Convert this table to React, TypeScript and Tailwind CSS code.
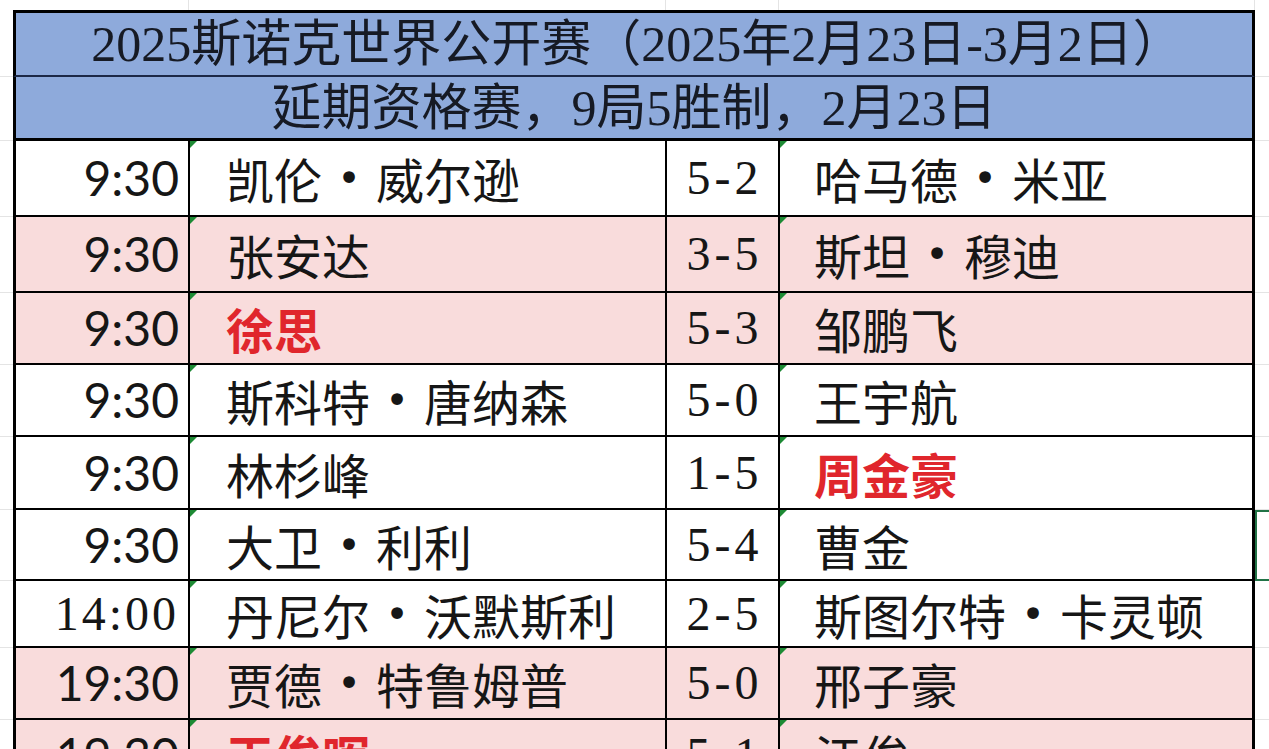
import { Fragment } from "react";

type Row = {
  time: string;
  serifTime?: boolean;
  p1: string;
  p1Red?: boolean;
  score: string;
  p2: string;
  p2Red?: boolean;
  pink?: boolean;
  h: string;
  selected?: boolean;
};

const rows: Row[] = [
  { time: "9:30", p1: "凯伦·威尔逊", score: "5-2", p2: "哈马德·米亚", h: "h-[76px]" },
  { time: "9:30", p1: "张安达", score: "3-5", p2: "斯坦·穆迪", pink: true, h: "h-[76px]" },
  { time: "9:30", p1: "徐思", p1Red: true, score: "5-3", p2: "邹鹏飞", pink: true, h: "h-[72px]" },
  { time: "9:30", p1: "斯科特·唐纳森", score: "5-0", p2: "王宇航", h: "h-[72px]" },
  { time: "9:30", p1: "林杉峰", score: "1-5", p2: "周金豪", p2Red: true, h: "h-[73px]" },
  { time: "9:30", p1: "大卫·利利", score: "5-4", p2: "曹金", h: "h-[71px]", selected: true },
  { time: "14:00", serifTime: true, p1: "丹尼尔·沃默斯利", score: "2-5", p2: "斯图尔特·卡灵顿", h: "h-[67px]" },
  { time: "19:30", p1: "贾德·特鲁姆普", score: "5-0", p2: "邢子豪", pink: true, h: "h-[72px]" },
  { time: "19:30", p1: "王俊晖", p1Red: true, score: "5-1", p2: "江俊", pink: true, h: "h-[72px]" },
];

function Name({ text, red }: { text: string; red?: boolean }) {
  const parts = text.split("·");
  return (
    <span
      className={
        red
          ? "flex items-center whitespace-nowrap font-['Noto_Sans_CJK_SC',sans-serif] text-[48px] font-bold leading-none text-[#e0262c]"
          : "flex items-center whitespace-nowrap font-['Noto_Sans_CJK_SC',sans-serif] text-[48px] leading-none text-[#161616]"
      }
    >
      {parts.map((p, i) => (
        <Fragment key={i}>
          {i > 0 && (
            <span className="inline-flex w-[54px] items-center justify-center font-['DejaVu_Sans',sans-serif] text-[40px] leading-none">
              •
            </span>
          )}
          <span>{p}</span>
        </Fragment>
      ))}
    </span>
  );
}

// little green "number stored as text" marker excel draws in a cell corner
function Flag() {
  return (
    <div className="absolute left-0 top-0 h-0 w-0 border-r-[7px] border-t-[7px] border-r-transparent border-t-[#1d8a34]" />
  );
}

export default function App() {
  return (
    <div className="h-[749px] w-[1269px] overflow-hidden bg-white">
      <div className="flex h-[10px]">
        <div className="w-[189px] border-r border-[#e4e4e4]" />
        <div className="w-[477px] border-r border-[#e4e4e4]" />
        <div className="w-[113px] border-r border-[#e4e4e4]" />
        <div className="w-[476px] border-r border-[#e4e4e4]" />
        <div className="flex-1" />
      </div>

      <div className="flex h-[67px]">
        <div className="w-[13px] border-b border-[#e4e4e4]" />
        <div className="flex w-[1242px] items-center justify-center border-x-[3px] border-t-[3px] border-b-2 border-black border-b-[#1c2846] bg-[#8eaadb]">
          <span className="whitespace-nowrap pl-[6px] font-['Liberation_Serif','Noto_Sans_CJK_SC',serif] text-[50px] leading-none text-[#161a24]">
            2025斯诺克世界公开赛（2025年2月23日-3月2日）
          </span>
        </div>
        <div className="flex-1 border-b border-[#e4e4e4]" />
      </div>

      <div className="flex h-[64px]">
        <div className="w-[13px] border-b border-[#e4e4e4]" />
        <div className="flex w-[1242px] items-center justify-center border-x-[3px] border-b-[3px] border-black bg-[#8eaadb]">
          <span className="whitespace-nowrap font-['Liberation_Serif','Noto_Sans_CJK_SC',serif] text-[50px] leading-none text-[#161a24]">
            延期资格赛，9局5胜制，2月23日
          </span>
        </div>
        <div className="flex-1 border-b border-[#e4e4e4]" />
      </div>

      {rows.map((r, i) => (
        <div key={i} className={`flex ${r.h}`}>
          <div className="w-[13px] border-b border-[#e4e4e4]" />
          <div
            className={`flex w-[1242px] border-x-[3px] border-b-2 border-black ${
              r.pink ? "bg-[#f9dcdc]" : "bg-white"
            }`}
          >
            <div className="flex w-[174px] items-center justify-end border-r-2 border-black pr-[9px]">
              <span
                className={
                  r.serifTime
                    ? "font-['Liberation_Serif',serif] text-[48px] leading-none tracking-[3px] text-[#161616]"
                    : "font-['Lato',sans-serif] text-[48px] leading-none text-[#161616]"
                }
              >
                {r.time}
              </span>
            </div>
            <div className="relative flex w-[477px] items-center border-r-2 border-black pl-[36px]">
              <Flag />
              <Name text={r.p1} red={r.p1Red} />
            </div>
            <div className="flex w-[113px] items-center justify-center border-r-2 border-black pl-[4px]">
              <span className="font-['Liberation_Serif',serif] text-[48px] leading-none tracking-[4px] text-[#161616]">
                {r.score}
              </span>
            </div>
            <div className="relative flex flex-1 items-center pl-[34px]">
              <Flag />
              <Name text={r.p2} red={r.p2Red} />
            </div>
          </div>
          {r.selected ? (
            <div className="flex-1 border-y-2 border-l-2 border-[#217346]" />
          ) : (
            <div className="flex-1 border-b border-[#e4e4e4]" />
          )}
        </div>
      ))}
    </div>
  );
}
